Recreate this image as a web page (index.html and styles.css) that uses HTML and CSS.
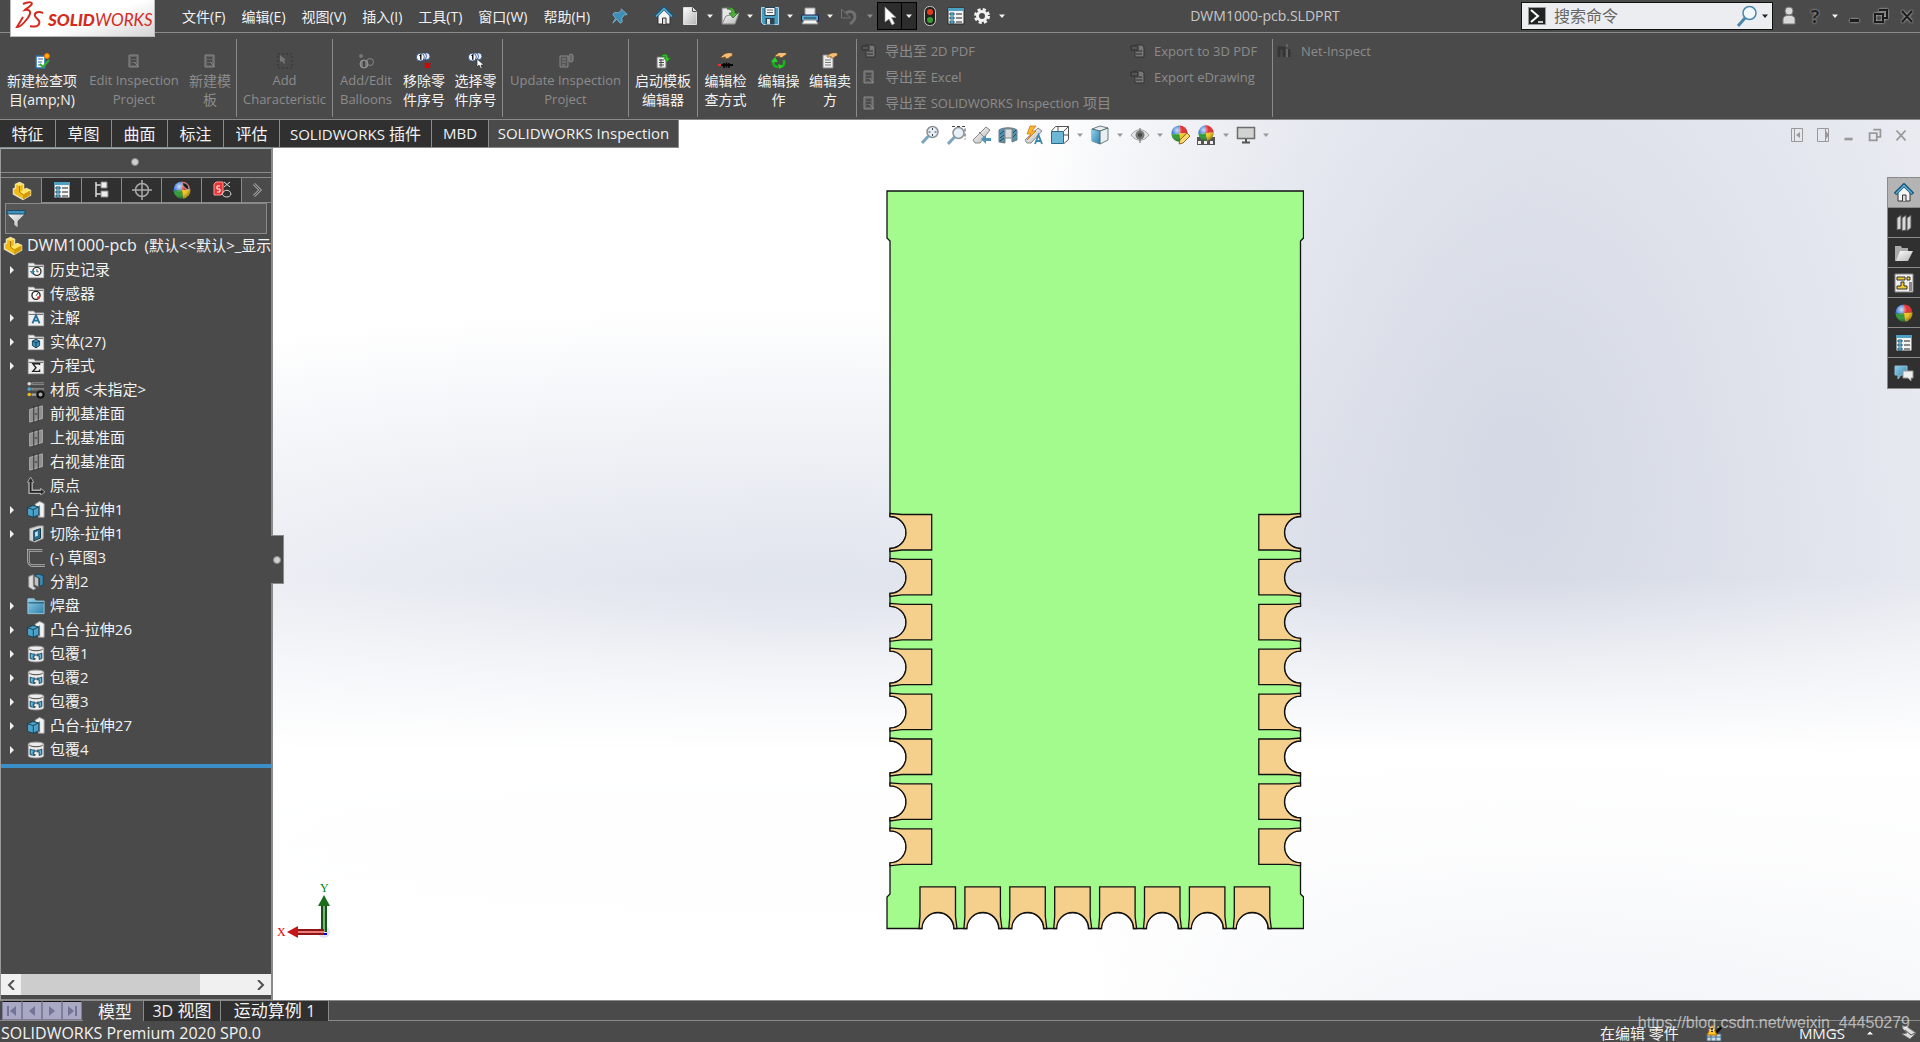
FILE: index.html
```html
<!DOCTYPE html>
<html lang="zh-CN">
<head>
<meta charset="utf-8">
<title>DWM1000-pcb.SLDPRT - SOLIDWORKS</title>
<link rel="stylesheet" href="styles.css">
</head>
<body>
<svg class="sprite" aria-hidden="true">
  <defs>
    <linearGradient id="gBlue" x1="0" y1="0" x2="1" y2="1"><stop offset="0" stop-color="#8fd0ee"/><stop offset="1" stop-color="#2f7fa6"/></linearGradient>
    <linearGradient id="gGrey" x1="0" y1="0" x2="1" y2="1"><stop offset="0" stop-color="#ffffff"/><stop offset="1" stop-color="#b4b4b4"/></linearGradient>
    <radialGradient id="gShine" cx=".35" cy=".3" r=".7"><stop offset="0" stop-color="#fff" stop-opacity=".75"/><stop offset=".5" stop-color="#fff" stop-opacity="0"/><stop offset="1" stop-color="#000" stop-opacity=".3"/></radialGradient>
    <symbol id="i-caret" viewBox="0 0 10 10"><path d="M2 3.500h6L5 7z" fill="currentColor"/></symbol>
    <symbol id="i-home" viewBox="0 0 20 20"><path d="M4 9v9h12V9l-6-6z" fill="#f4f4f4" stroke="#333"/><path d="M8.500 18v-6h3.500v6" fill="#ddd" stroke="#333"/><path d="M1 11 10 2l9 9" fill="none" stroke="#1c5878" stroke-width="3.500"/><path d="M2 10.500 10 2.500l8 8" fill="none" stroke="#58aed4" stroke-width="1.500"/></symbol>
    <symbol id="i-list" viewBox="0 0 20 20"><path d="M2 2h16v16H2z" fill="#f3f3f3" stroke="#2a2a2a"/><path d="M2 2h16v3H2z" fill="#4d9fc4"/><path d="M4 7h4v2H4zm0 4h4v2H4zm0 4h4v2H4z" fill="#8fd0ee" stroke="#155a7c"/><path d="M10 8h6m-6 4h6m-6 4h6" stroke="#222"/></symbol>
    <symbol id="i-ball" viewBox="0 0 20 20"><path d="M10 10V1.500A8.500 8.500 0 0 0 1.500 11z" fill="#3c78d8"/><path d="M10 10V1.500a8.500 8.500 0 0 1 8.500 8z" fill="#e23030"/><path d="M10 10 1.500 11A8.500 8.500 0 0 0 11 18.500z" fill="#2f9a35"/><path d="m10 10 8.500-.5A8.500 8.500 0 0 1 11 18.500z" fill="#f3c81d"/><circle cx="10" cy="10" r="8.500" fill="url(#gShine)"/></symbol>
    <symbol id="i-part" viewBox="0 0 20 20"><path d="m1.500 8 2-1V3.500l4-2 4 2V9l3-1.500 4 2v4.500L11 18.500 1.500 13z" fill="#f2b90f" stroke="#e8dfb8" stroke-width="1.500"/><path d="m3.500 3.500 4 1.500 4-1.500-4-2zM7.500 11l7-3.500 4 2-7.500 4z" fill="#ffe566"/><path d="M11 13.500v5l7.500-4.500V9.500z" fill="#d59a08"/><path d="M7.500 5v6l3.500 2.500" fill="none" stroke="#8c6300" stroke-width=".7"/></symbol>
    <symbol id="i-folder" viewBox="0 0 20 20"><path d="M1.500 18.500v-16h6l1.500 2h9.500v14z" fill="#efefef" stroke="#bdbdbd"/><path d="M2 6h16" stroke="#555"/></symbol>
    <symbol id="i-plane" viewBox="0 0 20 20"><path d="M3 5 17 1v14L3 19z" fill="#8f8f8f" stroke="#bababa"/><path d="M7.500 1v18.500M12.500 0v18" stroke="#2c2c2c"/><path d="M8.500 10h3" stroke="#2c2c2c"/></symbol>
    <symbol id="i-boss" viewBox="0 0 20 20"><path d="M9 3.500 14 .5l5 2.500v15h-6z" fill="#f2f2f2" stroke="#a0a0a0"/><path d="M14 5v12" stroke="#666"/><path d="m.500 7.500 6-2.500 6.500 1.500v9l-6 2.500-6.500-2z" fill="#4ea1c7" stroke="#123d52"/><path d="m.500 7.500 6.500 2 6-3M7 9.500v8.500" fill="none" stroke="#0f4059"/></symbol>
    <symbol id="i-cut" viewBox="0 0 20 20"><path d="m3 4 10-3h5v14l-9 4-6-2z" fill="#d8d8d8" stroke="#a2a2a2"/><path d="M7.500 6.500 15 4v10.500l-7.500 3z" fill="#2a6d8f" stroke="#0f2c3b"/><path d="m9 8 3-1v5l-3 1z" fill="#bfe6f7"/></symbol>
    <symbol id="i-split" viewBox="0 0 20 20"><path d="m2 4 5-2v13l3 2-3 1.500-5-3z" fill="#dedede" stroke="#999"/><path d="m8 3 5-2 5 2v10l-4 2V6z" fill="#3b8fb7" stroke="#153f54"/><path d="m8 3 5 3v10l-5-3z" fill="#c3c3c3" stroke="#555"/></symbol>
    <symbol id="i-wrap" viewBox="0 0 20 20"><path d="M1.500 3.500C1.500.5 18.500.5 18.500 3.500v13c0 3-17 3-17 0z" fill="#ececec" stroke="#aaa"/><path d="M2.500 4.500c3 2.500 12 2.500 15 0" fill="none" stroke="#333"/><path d="M3.500 9c2 1 3.500 1.200 5.500 1.200v2H7v2.500h2V16c-2 0-4-.3-5.500-1zM11 10.200c2 0 3.500-.2 5.500-1.200v6c-1.500.7-2 .8-3 1v-4h-2.500z" fill="#5cb3da" stroke="#123c50"/></symbol>
    <symbol id="i-export" viewBox="0 0 16 16"><path d="M5 2h7l2 2v10H5z" fill="#777" stroke="#333"/><path d="M1 3h7v4H1zM6 8h6M6 11h6" fill="#555" stroke="#2c2c2c"/></symbol>
    <symbol id="i-sheet" viewBox="0 0 16 16"><path d="M3 2h9v12H3z" fill="#646464" stroke="#888"/><path d="M5 5h5M5 8h5M5 11h5" stroke="#333"/><path d="m8 9 5 5" stroke="#888"/></symbol>
    <symbol id="i-balloon" viewBox="0 0 16 16"><circle cx="12" cy="6" r="4" fill="#e6efff" stroke="#2e4f8e"/><circle cx="8" cy="6" r="4" fill="#e6efff" stroke="#2e4f8e"/><circle cx="5" cy="7" r="4.500" fill="#fff" stroke="#2e4f8e"/><path d="m4 5.500 1.500-1V10" fill="none" stroke="#000" stroke-width="1.500"/></symbol>
    <symbol id="i-hand" viewBox="0 0 16 16"><path d="m1 6 5-4 4-1h5v4l-3 1-2 2H6l1-2-5 1z" fill="#f4c078" stroke="#7c4b15" stroke-width=".8"/></symbol>
    <symbol id="i-lens" viewBox="0 0 20 20"><circle cx="12.500" cy="7" r="5.500" fill="#e6f0f6" stroke="#8b9297" stroke-width="1.500"/><path d="m8.500 11-6.500 7" stroke="#7aa5bd" stroke-width="3"/></symbol>
    <symbol id="i-restore" viewBox="0 0 20 20"><path d="M8 4h8v8h-3M4 8h8v8H4z" fill="none" stroke="currentColor" stroke-width="2"/></symbol>
    <symbol id="i-min" viewBox="0 0 20 20"><path d="M5 13h9v3H5z" fill="currentColor"/></symbol>
    <symbol id="i-close" viewBox="0 0 20 20"><path d="m5 5 10 11M15 5 5 16" stroke="currentColor" stroke-width="2"/></symbol>
    <symbol id="i-arrow" viewBox="0 0 10 10"><path d="M3 1v8l4-4z" fill="currentColor"/></symbol>
  </defs>
</svg>

<header class="titlebar">
  <div class="logo">
    <svg viewBox="0 0 144 36" width="144" height="36" role="img" aria-label="SOLIDWORKS">
      <g fill="none" stroke="#d52b1e" stroke-width="2">
        <path d="M12 4c6-3 12-2 7 2-2 2-4 3-5 4 7-1 6 4 2 9-3 4-7 8-10 8l6-10" />
        <path d="M32 13c-4-2-9-1-8 3 1 3 6 4 4 8-1 3-6 3-9 2"/>
      </g>
      <text x="37" y="26" class="logo-text"><tspan class="logo-bold">SOLID</tspan><tspan>WORKS</tspan></text>
    </svg>
  </div>
  <nav class="menu">
    <button>文件(F)</button><button>编辑(E)</button><button>视图(V)</button><button>插入(I)</button><button>工具(T)</button><button>窗口(W)</button><button>帮助(H)</button>
  </nav>
  <button class="pin" aria-label="固定菜单"><svg class="ic18" viewBox="0 0 20 20"><path d="m11 2 7 6-2 1-1-.5-3 4 .5 4L10 18l-3.500-4.500L2 18l3-5.500L2 8l2-2 4 .5 4-3z" fill="#3d8fb8" stroke="#7fb0c8"/></svg></button>
  <div class="quick">
    <button class="tool" aria-label="主页"><svg class="ic20"><use href="#i-home"/></svg></button>
    <button class="tool" aria-label="新建"><svg class="ic20" viewBox="0 0 20 20"><path d="M3.500 1.500h9l4 4v13h-13z" fill="url(#gGrey)" stroke="#ddd"/><path d="M12.500 1.500v4h4" fill="none" stroke="#555"/></svg></button><button class="drop" aria-label="更多"><svg class="ic10"><use href="#i-caret"/></svg></button>
    <button class="tool" aria-label="打开"><svg class="ic20" viewBox="0 0 20 20"><path d="M2 2h9l3 3v13H2z" fill="#e8e8e8" stroke="#777"/><path d="m6 10 13-3-4 11H2z" fill="url(#gGrey)" stroke="#888"/><path d="M7 3c5-3 8 0 8 4h3l-5 5-4-5h3c0-3-2-4-5-4z" fill="#4fb03c" stroke="#1d6112" stroke-width=".7"/></svg></button><button class="drop" aria-label="更多"><svg class="ic10"><use href="#i-caret"/></svg></button>
    <button class="tool" aria-label="保存"><svg class="ic20" viewBox="0 0 20 20"><path d="M1.500 1.500h17v17h-15l-2-2z" fill="#4b9cc3" stroke="#a8d6ea"/><path d="M5 1.500h10v8H5z" fill="#f6f6f6" stroke="#245"/><path d="M7 4h6M7 6.500h6" stroke="#666"/><path d="M5.500 12h9v6.500h-9z" fill="#2c4350"/><path d="M7 13h3v5H7z" fill="#ddd"/></svg></button><button class="drop" aria-label="更多"><svg class="ic10"><use href="#i-caret"/></svg></button>
    <button class="tool" aria-label="打印"><svg class="ic20" viewBox="0 0 20 20"><path d="M5 2h10v8H5z" fill="#eee" stroke="#999"/><path d="M1.500 9h17v6h-17z" fill="#58a8cd" stroke="#225"/><path d="M4 12h12" stroke="#163b4f"/><path d="M4 14h12l2 4H2z" fill="#f4f4f4" stroke="#888"/></svg></button><button class="drop" aria-label="更多"><svg class="ic10"><use href="#i-caret"/></svg></button>
    <button class="tool" aria-label="撤销" disabled><svg class="ic20" viewBox="0 0 20 20"><path d="M6 7c7-5 14 4 4 11" fill="none" stroke="#717171" stroke-width="3"/><path d="M1.500 3v9h9z" fill="#4a4a4a" stroke="#717171"/></svg></button><button class="drop dim" aria-label="更多" disabled><svg class="ic10"><use href="#i-caret"/></svg></button>
    <div class="select-tool"><button class="tool" aria-label="选择"><svg class="ic20" viewBox="0 0 20 20"><path d="M5 1v15l4-3 3 6 2.500-1.500-3-6H16z" fill="#fff" stroke="#999" stroke-width=".7"/></svg></button><button class="drop" aria-label="更多"><svg class="ic10"><use href="#i-caret"/></svg></button></div>
    <button class="tool" aria-label="重建模型"><svg class="ic20" viewBox="0 0 20 20"><rect x="4.500" y=".5" width="11" height="19" rx="5" fill="#222" stroke="#ccc"/><circle cx="10" cy="6" r="3" fill="#e23b20"/><circle cx="10" cy="14" r="3" fill="#3a9b32"/></svg></button>
    <button class="tool" aria-label="文件属性"><svg class="ic20"><use href="#i-list"/></svg></button>
    <button class="tool" aria-label="选项"><svg class="ic20" viewBox="0 0 20 20"><circle cx="10" cy="10" r="6.500" fill="none" stroke="#f2f2f2" stroke-width="3" stroke-dasharray="3 2.100"/><circle cx="10" cy="10" r="4.500" fill="none" stroke="#f2f2f2" stroke-width="3"/></svg></button><button class="drop" aria-label="更多"><svg class="ic10"><use href="#i-caret"/></svg></button>
  </div>
  <h1 class="doc-title">DWM1000-pcb.SLDPRT</h1>
  <div class="search">
    <svg class="ic18" viewBox="0 0 18 18"><path d="M.5.500h17v17H.5z" fill="#222" stroke="#999"/><path d="m3 3 7 6-7 6" fill="none" stroke="#fff" stroke-width="2"/><path d="M10 15h5" stroke="#fff" stroke-width="1.500"/></svg>
    <input type="text" placeholder="搜索命令" aria-label="搜索命令">
    <svg class="ic22" viewBox="0 0 22 22"><circle cx="13.500" cy="8" r="6.500" fill="#f2f8fc" stroke="#4c86a8" stroke-width="1.500"/><path d="m9 13-7 8" stroke="#4c86a8" stroke-width="3"/></svg>
    <button class="drop dark" aria-label="更多"><svg class="ic10"><use href="#i-caret"/></svg></button>
  </div>
  <div class="window-tools">
    <button class="tool" aria-label="登录"><svg class="ic20" viewBox="0 0 20 20"><circle cx="10" cy="5" r="4" fill="#d9d9d9" stroke="#777"/><path d="M4 18v-5c0-5 12-5 12 0v5z" fill="#d9d9d9" stroke="#777"/></svg></button>
    <button class="tool help" aria-label="帮助">?</button><button class="drop" aria-label="更多"><svg class="ic10"><use href="#i-caret"/></svg></button>
    <button class="tool win" aria-label="最小化"><svg class="ic20"><use href="#i-min"/></svg></button>
    <button class="tool win" aria-label="还原"><svg class="ic20"><use href="#i-restore"/></svg></button>
    <button class="tool win" aria-label="关闭"><svg class="ic20"><use href="#i-close"/></svg></button>
  </div>
</header>

<section class="ribbon">
  <div class="group g-project">
    <button><svg class="ic16" viewBox="0 0 16 16"><path d="M2 3h9v12H2z" fill="#fff" stroke="#2a6aa8" stroke-width="1.500"/><path d="M4 6h5M4 9h4M4 12h3" stroke="#2a6aa8"/><path d="m6 11 3 3 6-7" fill="none" stroke="#2fae2f" stroke-width="2"/><circle cx="13" cy="3" r="2.500" fill="#ffb400" stroke="#ff6a00"/></svg><span>新建检查项<br>目(amp;N)</span></button>
    <button disabled><svg class="ic16"><use href="#i-sheet"/></svg><span class="en">Edit Inspection<br>Project</span></button>
    <button disabled><svg class="ic16"><use href="#i-sheet"/></svg><span>新建模<br>板</span></button>
  </div>
  <div class="group g-char">
    <button disabled><svg class="ic16" viewBox="0 0 16 16"><path d="M1 1h14v14H1z" fill="none" stroke="#333" stroke-dasharray="2 2"/><path d="M3 2v7l2-1 2 3 1-1-1-3h2z" fill="#777"/></svg><span class="en">Add<br>Characteristic</span></button>
  </div>
  <div class="group g-balloon">
    <button disabled><svg class="ic16" viewBox="0 0 16 16"><circle cx="12" cy="9" r="3.500" fill="none" stroke="#888"/><circle cx="6" cy="11" r="4" fill="#777" stroke="#999"/><path d="M6 8v6" stroke="#333" stroke-width="1.500"/><circle cx="3" cy="3" r="2" fill="#777"/></svg><span class="en">Add/Edit<br>Balloons</span></button>
    <button><svg class="ic16" viewBox="0 0 16 16"><use href="#i-balloon" y="-2" width="14" height="14"/><path d="m9 10 5 5m0-5-5 5" stroke="#e00000" stroke-width="2"/></svg><span>移除零<br>件序号</span></button>
    <button><svg class="ic16" viewBox="0 0 16 16"><use href="#i-balloon" y="-2" width="14" height="14"/><path d="M9 6v8l2-2 2 4 1-1-1-3h3z" fill="#fff" stroke="#222" stroke-width=".6"/></svg><span>选择零<br>件序号</span></button>
  </div>
  <div class="group g-update">
    <button disabled><svg class="ic16" viewBox="0 0 16 16"><path d="M2 3h8v11H2z" fill="#555" stroke="#888"/><path d="M4 6h4M4 9h4M4 12h3" stroke="#888"/><rect x="11" y="1" width="4" height="8" rx="2" fill="#666" stroke="#888"/></svg><span class="en">Update Inspection<br>Project</span></button>
  </div>
  <div class="group g-template">
    <button><svg class="ic16" viewBox="0 0 16 16"><path d="M2 4h9v11H2z" fill="#f1f1f1" stroke="#777"/><path d="M4 7h5M4 9.500h5M4 12h5M6 6v8" stroke="#444"/><path d="M7 2c4-2 6 0 6 3h2.500L12 9 9 5h2c0-2-2-2-4-1z" fill="#35c42a" stroke="#117a0a" stroke-width=".6"/></svg><span>启动模板<br>编辑器</span></button>
  </div>
  <div class="group g-edit">
    <button><svg class="ic16" viewBox="0 0 16 16"><use href="#i-hand" x="2" y="-1" width="13" height="13"/><path d="M1 12h14" stroke="#000" stroke-width="2"/><path d="M6 10v5M8.500 9.500v5M11 10v5" stroke="#000" stroke-width="1.500"/><path d="M0 12h3" stroke="#e33" stroke-width="2"/></svg><span>编辑检<br>查方式</span></button>
    <button><svg class="ic16" viewBox="0 0 16 16"><use href="#i-hand" x="3" y="-2" width="13" height="13"/><path d="M3 7c-2 5 1 7 4 7M13 7c1 4-1 7-4 7" fill="none" stroke="#18b31a" stroke-width="2.500"/><path d="m0 9 4-5 3 5zM8 16l-1-5 5 2z" fill="#27d327"/></svg><span>编辑操<br>作</span></button>
    <button><svg class="ic16" viewBox="0 0 16 16"><path d="M1 2h10v13H1z" fill="#eee" stroke="#888"/><path d="M3 7h6M3 9.500h6M3 12h6" stroke="#777"/><use href="#i-hand" x="4" y="-1" width="12" height="12"/></svg><span>编辑卖<br>方</span></button>
  </div>
  <div class="group exports">
    <button disabled><svg class="ic16"><use href="#i-export"/></svg><span>导出至 <span class="en">2D PDF</span></span></button>
    <button disabled><svg class="ic16"><use href="#i-export"/></svg><span class="en">Export to 3D PDF</span></button>
    <button disabled><svg class="ic16"><use href="#i-sheet"/></svg><span>导出至 <span class="en">Excel</span></span></button>
    <button disabled><svg class="ic16"><use href="#i-export"/></svg><span class="en">Export eDrawing</span></button>
    <button disabled class="wide"><svg class="ic16"><use href="#i-sheet"/></svg><span>导出至 <span class="en">SOLIDWORKS Inspection</span> 项目</span></button>
  </div>
  <div class="group net">
    <button disabled><svg class="ic16" viewBox="0 0 16 16"><path d="M2 14V5h5v9M12 6v8" fill="none" stroke="#363636" stroke-width="3"/><path d="M10 14V6M10 4V1" stroke="#666" stroke-width="2"/></svg><span class="en">Net-Inspect</span></button>
  </div>
</section>

<main class="work">
  <div class="command-row">
    <div class="cmd-tabs">
      <button>特征</button><button>草图</button><button>曲面</button><button>标注</button><button>评估</button><button><span><span class="en">SOLIDWORKS</span> 插件</span></button><button><span class="en">MBD</span></button><button class="active"><span class="en">SOLIDWORKS Inspection</span></button>
    </div>
    <div class="hud">
      <button class="tool" aria-label="整屏显示全图"><svg class="ic20" viewBox="0 0 20 20"><use href="#i-lens"/><path d="M12.500 3v8M8.500 7h8" stroke="#444" stroke-dasharray="2 4"/></svg></button>
      <button class="tool" aria-label="局部放大"><svg class="ic20" viewBox="0 0 20 20"><path d="M6 1.500h13v13" fill="none" stroke="#444" stroke-dasharray="3 2"/><use href="#i-lens" y="1"/></svg></button>
      <button class="tool" aria-label="上一视图"><svg class="ic20" viewBox="0 0 20 20"><path d="M1 15 14 2l4 3L8 18H3z" fill="url(#gGrey)" stroke="#888"/><path d="m7 7 5 5" stroke="#888"/><path d="m9 14 5-4v3h5v3h-5v3z" fill="#4d94b8"/></svg></button>
      <button class="tool" aria-label="剖面视图"><svg class="ic20" viewBox="0 0 20 20"><path d="M1 5c4-3 14-3 18 0v10l-5 2V9H7v9l-6-1z" fill="#4f94b5" stroke="#777"/><path d="M7 4h7v9H7z" fill="#ddd" stroke="#888"/><path d="m2 9 4-3m-4 7 4-3m-4 6 4-3m9-5 3-3m-3 7 3-3" stroke="#1d4a60"/></svg></button>
      <button class="tool" aria-label="动态注解视图"><svg class="ic20" viewBox="0 0 20 20"><path d="M1 15 14 3l4 3L7 18H3z" fill="url(#gGrey)" stroke="#888"/><path d="m6 1-3 8h4l-4 6 9-9H8l4-5z" fill="#ffb52c" stroke="#c46c10" stroke-width=".7"/><path d="m11 19 3.500-9L18 19m-6-3h5" fill="none" stroke="#3b86ab" stroke-width="1.800"/></svg></button>
      <button class="tool" aria-label="视图定向"><svg class="ic20" viewBox="0 0 20 20"><path d="m1.500 6 4-4.500h13v13l-4.500 4m0-12.500 4.500-4.500M8 1.500V7m10 3h-4" fill="none" stroke="#555"/><path d="M1.500 6.500h12v12h-12z" fill="#6db6d6" stroke="#2c6a88"/></svg></button><button class="drop" aria-label="更多"><svg class="ic10"><use href="#i-caret"/></svg></button>
      <button class="tool" aria-label="显示样式"><svg class="ic20" viewBox="0 0 20 20"><path d="m2 4 8-3 8 2v12l-8 4-8-3z" fill="#e9eef1" stroke="#6b7a82"/><path d="m2 4 8 2v13l-8-3z" fill="url(#gBlue)"/><path d="M10 6v13M2 4l8 2 8-3" fill="none" stroke="#44626f"/></svg></button><button class="drop" aria-label="更多"><svg class="ic10"><use href="#i-caret"/></svg></button>
      <button class="tool" aria-label="隐藏/显示项目"><svg class="ic20" viewBox="0 0 20 20"><path d="M1 10c5-7 13-7 18 0-5 7-13 7-18 0z" fill="#e4e4e4" stroke="#a5a5a5"/><circle cx="10" cy="10" r="4.500" fill="#777"/><circle cx="10" cy="10" r="2" fill="#333"/><path d="M10 3v15" stroke="#666"/></svg></button><button class="drop" aria-label="更多"><svg class="ic10"><use href="#i-caret"/></svg></button>
      <button class="tool" aria-label="编辑外观"><svg class="ic20" viewBox="0 0 20 20"><use href="#i-ball" x="0" y="-1" width="19" height="19"/><path d="m9 19 1-4 7-7 3 3-7 7z" fill="#ffd76c" stroke="#8b6a2c"/></svg></button>
      <button class="tool" aria-label="应用布景"><svg class="ic20" viewBox="0 0 20 20"><path d="M1 12h18v8H1z" fill="#555"/><path d="M2 16h3v3H2zm6 0h3v3H8zm6 0h3v3h-3z" fill="#eee"/><use href="#i-ball" x="1" y="-1" width="18" height="18"/></svg></button><button class="drop" aria-label="更多"><svg class="ic10"><use href="#i-caret"/></svg></button>
      <button class="tool" aria-label="视图设定"><svg class="ic20" viewBox="0 0 20 20"><path d="M1.500 2.500h17v11h-17z" fill="#d2d2d2" stroke="#6d6d6d" stroke-width="1.500"/><path d="M10 14v3m-4 .5h8" stroke="#555" stroke-width="2"/></svg></button><button class="drop" aria-label="更多"><svg class="ic10"><use href="#i-caret"/></svg></button>
    </div>
    <div class="doc-tools">
      <button class="tool" aria-label="左侧窗格"><svg class="ic16" viewBox="0 0 16 16"><path d="M2.500 1.500h11v13h-11zM5.500 2v12" fill="none" stroke="currentColor"/><path d="M11 5v6L7 8z" fill="currentColor"/></svg></button>
      <button class="tool" aria-label="右侧窗格"><svg class="ic16" viewBox="0 0 16 16"><path d="M2.500 1.500h11v13h-11zM10.500 2v12" fill="none" stroke="currentColor"/><path d="M11 4v8l3-4z" fill="currentColor"/></svg></button>
      <button class="tool" aria-label="最小化文档"><svg class="ic18"><use href="#i-min"/></svg></button>
      <button class="tool" aria-label="还原文档"><svg class="ic18"><use href="#i-restore"/></svg></button>
      <button class="tool" aria-label="关闭文档"><svg class="ic18"><use href="#i-close"/></svg></button>
    </div>
  </div>

  <div class="workspace">
    <aside class="panel">
      <div class="grip"><i class="dot"></i></div>
      <div class="panel-tabs">
        <button class="active" aria-label="特征树"><svg class="ic20"><use href="#i-part"/></svg></button>
        <button aria-label="属性"><svg class="ic20"><use href="#i-list"/></svg></button>
        <button aria-label="配置"><svg class="ic20" viewBox="0 0 20 20"><path d="M4 2v15M4 5h6M4 14h6" fill="none" stroke="#ddd" stroke-width="1.500"/><path d="M9 2h6v6H9zM9 11h7v6H9z" fill="#eee" stroke="#888"/></svg></button>
        <button aria-label="尺寸专家"><svg class="ic20" viewBox="0 0 20 20"><circle cx="10" cy="10" r="6.500" fill="none" stroke="#aaa" stroke-width="1.500"/><path d="M10 0v20M0 10h20" stroke="#aaa" stroke-width="1.500"/></svg></button>
        <button aria-label="外观"><svg class="ic20" viewBox="0 0 20 20"><use href="#i-ball"/><path d="M10 3c4-1 7 2 7 7-3-1-6-3-7-7z" fill="#1c1c1c" stroke="#ddd" stroke-width=".7"/></svg></button>
        <button aria-label="检查"><svg class="ic20" viewBox="0 0 20 20"><path d="m2 4 2-2h7v11l-2 2H2z" fill="#e83434" stroke="#ff9a9a"/><path d="M8 6H5v3h3v3H5" fill="none" stroke="#fff"/><path d="m12 2 6 5m0-5-6 5m-2 7c2-5 8-5 9 0-1 4-7 4-9 0z" fill="none" stroke="#ddd"/></svg></button>
        <button class="more" aria-label="更多选项卡"><svg class="ic16" viewBox="0 0 16 16"><path d="m5 2 6 6-6 6" fill="none" stroke="#999" stroke-width="3"/><path d="m5 2 6 6-6 6" fill="none" stroke="#4a4a4a"/></svg></button>
      </div>
      <label class="filter"><svg class="ic20" viewBox="0 0 20 20"><path d="M1 2h18v3l-7 7v7l-4-3v-4L1 5z" fill="url(#gGrey)" stroke="#333" stroke-width=".5"/><path d="M1 1.500h18V5H1z" fill="#3f93ba" stroke="#1d4b62"/></svg><input type="text" aria-label="过滤器"></label>
      <ul class="tree">
        <li class="root"><svg class="ic20"><use href="#i-part"/></svg><span><span class="name">DWM1000-pcb</span>&nbsp; (默认&lt;&lt;默认&gt;_显示</span></li>
        <li><button class="twist" aria-label="展开"><svg class="ic10"><use href="#i-arrow"/></svg></button><svg class="ic18" viewBox="0 0 20 20"><use href="#i-folder"/><circle cx="11" cy="11.500" r="4.500" fill="#fff" stroke="#333" stroke-width="1.500"/><path d="M11 9v3h2" fill="none" stroke="#333"/><path d="m3 11 3 4 3-4z" fill="#3487b0"/></svg><span>历史记录</span></li>
        <li><i class="twist"></i><svg class="ic18" viewBox="0 0 20 20"><use href="#i-folder"/><circle cx="10" cy="11.500" r="4.500" fill="#fff" stroke="#222" stroke-width="1.500"/><path d="m10 12 3-4" stroke="#222"/><path d="M12 16a5 5 0 0 0 3-4l-4 1z" fill="#e03a20"/></svg><span>传感器</span></li>
        <li><button class="twist" aria-label="展开"><svg class="ic10"><use href="#i-arrow"/></svg></button><svg class="ic18" viewBox="0 0 20 20"><use href="#i-folder"/><path d="m6 16 4-9 4 9m-7-3h6" fill="none" stroke="#246f96" stroke-width="2"/></svg><span>注解</span></li>
        <li><button class="twist" aria-label="展开"><svg class="ic10"><use href="#i-arrow"/></svg></button><svg class="ic18" viewBox="0 0 20 20"><use href="#i-folder"/><path d="m6 9 4-2 4 2v5l-4 2.500L6 14z" fill="#3e93bb" stroke="#10394e"/><path d="m6 9 4 2 4-2m-4 2v5" fill="none" stroke="#10394e"/></svg><span>实体(27)</span></li>
        <li><button class="twist" aria-label="展开"><svg class="ic10"><use href="#i-arrow"/></svg></button><svg class="ic18" viewBox="0 0 20 20"><use href="#i-folder"/><path d="M14 9V7.500H6.500L10 12l-3.500 4H14v-2" fill="none" stroke="#222" stroke-width="1.500"/></svg><span>方程式</span></li>
        <li><i class="twist"></i><svg class="ic18" viewBox="0 0 20 20"><path d="M5 3h14M5 9h14M5 15h7" stroke="#aaa" stroke-width="2.500"/><path d="M6 3h13M6 9h13" stroke="#444"/><circle cx="2.500" cy="3" r="2" fill="#ddd"/><circle cx="2.500" cy="9" r="2" fill="#4fa9d2"/><circle cx="2.500" cy="15" r="2" fill="#f0b818"/><circle cx="15" cy="15" r="3.500" fill="#aaa" stroke="#111" stroke-width="2.500"/></svg><span>材质 &lt;未指定&gt;</span></li>
        <li><i class="twist"></i><svg class="ic18"><use href="#i-plane"/></svg><span>前视基准面</span></li>
        <li><i class="twist"></i><svg class="ic18"><use href="#i-plane"/></svg><span>上视基准面</span></li>
        <li><i class="twist"></i><svg class="ic18"><use href="#i-plane"/></svg><span>右视基准面</span></li>
        <li><i class="twist"></i><svg class="ic18" viewBox="0 0 20 20"><path d="M4 3v13.500h13" fill="none" stroke="#b0b0b0" stroke-width="5"/><path d="m.5 6 3.500-6 3.500 6zM15 12.500l5 4-5 4z" fill="#333" stroke="#b0b0b0"/><path d="M4 3v13.500h13" fill="none" stroke="#222" stroke-width="2"/></svg><span>原点</span></li>
        <li><button class="twist" aria-label="展开"><svg class="ic10"><use href="#i-arrow"/></svg></button><svg class="ic18"><use href="#i-boss"/></svg><span>凸台-拉伸1</span></li>
        <li><button class="twist" aria-label="展开"><svg class="ic10"><use href="#i-arrow"/></svg></button><svg class="ic18"><use href="#i-cut"/></svg><span>切除-拉伸1</span></li>
        <li><i class="twist"></i><svg class="ic18" viewBox="0 0 20 20"><path d="M17 1.500H1.500V13c0 3 2 5.500 5 5.500H20" fill="none" stroke="#b0b0b0" stroke-width="3"/><path d="M17 1.500H1.500V13c0 3 2 5.500 5 5.500H20" fill="none" stroke="#444"/></svg><span>(-) 草图3</span></li>
        <li><i class="twist"></i><svg class="ic18"><use href="#i-split"/></svg><span>分割2</span></li>
        <li><button class="twist" aria-label="展开"><svg class="ic10"><use href="#i-arrow"/></svg></button><svg class="ic18" viewBox="0 0 20 20"><path d="M1 18.500V2h7l1.500 2.500H19v14z" fill="url(#gBlue)" stroke="#9bc9de"/><path d="M1.500 6.500H19" stroke="#163f54"/></svg><span>焊盘</span></li>
        <li><button class="twist" aria-label="展开"><svg class="ic10"><use href="#i-arrow"/></svg></button><svg class="ic18"><use href="#i-boss"/></svg><span>凸台-拉伸26</span></li>
        <li><button class="twist" aria-label="展开"><svg class="ic10"><use href="#i-arrow"/></svg></button><svg class="ic18"><use href="#i-wrap"/></svg><span>包覆1</span></li>
        <li><button class="twist" aria-label="展开"><svg class="ic10"><use href="#i-arrow"/></svg></button><svg class="ic18"><use href="#i-wrap"/></svg><span>包覆2</span></li>
        <li><button class="twist" aria-label="展开"><svg class="ic10"><use href="#i-arrow"/></svg></button><svg class="ic18"><use href="#i-wrap"/></svg><span>包覆3</span></li>
        <li><button class="twist" aria-label="展开"><svg class="ic10"><use href="#i-arrow"/></svg></button><svg class="ic18"><use href="#i-boss"/></svg><span>凸台-拉伸27</span></li>
        <li><button class="twist" aria-label="展开"><svg class="ic10"><use href="#i-arrow"/></svg></button><svg class="ic18"><use href="#i-wrap"/></svg><span>包覆4</span></li>
      </ul>
      <div class="hscroll">
        <button aria-label="向左滚动"><svg class="ic10" viewBox="0 0 10 10"><path d="M8 0 3 5l5 5" fill="none" stroke="#505050" stroke-width="2"/></svg></button>
        <div class="track"><div class="thumb"></div></div>
        <button aria-label="向右滚动"><svg class="ic10" viewBox="0 0 10 10"><path d="m2 0 5 5-5 5" fill="none" stroke="#505050" stroke-width="2"/></svg></button>
      </div>
      <div class="panel-foot"></div>
    </aside>

    <section class="viewport">
      <button class="collapse" aria-label="收起面板"><i class="dot"></i></button>
      <svg class="pcb" viewBox="0 0 418 740" width="418" height="740" role="img" aria-label="DWM1000 PCB">
        <defs>
          <path id="pad" d="M0-19 12-18H41.700V17.500H12L0 19V16A16 16 0 0 0 0-16z" fill="#f4d08c" stroke="#111" stroke-width="1.300"/>
          <g id="pads">
            <use href="#pad"/><use href="#pad" y="44.900"/><use href="#pad" y="89.800"/><use href="#pad" y="134.700"/><use href="#pad" y="179.600"/><use href="#pad" y="224.500"/><use href="#pad" y="269.400"/><use href="#pad" y="314.300"/>
          </g>
        </defs>
        <path d="M1 1H417.500V48l-3 3V326.500a16 16 0 0 0 0 32v12.900a16 16 0 0 0 0 32v12.900a16 16 0 0 0 0 32v12.900a16 16 0 0 0 0 32v12.900a16 16 0 0 0 0 32v12.900a16 16 0 0 0 0 32v12.900a16 16 0 0 0 0 32v12.900a16 16 0 0 0 0 32V704l3 3V738.500H382a16 16 0 0 0-32 0h-12.900a16 16 0 0 0-32 0h-12.900a16 16 0 0 0-32 0h-12.900a16 16 0 0 0-32 0h-12.900a16 16 0 0 0-32 0h-12.900a16 16 0 0 0-32 0h-12.900a16 16 0 0 0-32 0h-12.900a16 16 0 0 0-32 0H1V707l3-3V672.800a16 16 0 0 0 0-32v-12.900a16 16 0 0 0 0-32v-12.900a16 16 0 0 0 0-32v-12.900a16 16 0 0 0 0-32v-12.900a16 16 0 0 0 0-32v-12.900a16 16 0 0 0 0-32v-12.900a16 16 0 0 0 0-32v-12.900a16 16 0 0 0 0-32V51l-3-3z" fill="#a3fb8e" stroke="#111" stroke-width="1.300"/>
        <use href="#pads" transform="translate(4 342.500)"/>
        <use href="#pads" transform="translate(414.500 342.500) scale(-1 1)"/>
        <use href="#pads" transform="translate(52 738.500) rotate(-90)"/>
      </svg>
      <svg class="triad" viewBox="0 0 60 64" width="60" height="64" role="img" aria-label="坐标轴">
        <circle cx="47" cy="54" r="6" fill="#e3e0f8"/>
        <path d="M44 56h6" stroke="#00c" stroke-width="2"/>
        <path d="M47 27v27" stroke="#145516" stroke-width="6"/><path d="M47 27v27" stroke="#7cb57c" stroke-width="2"/><path d="m47 17 6 11H41z" fill="#1a6e1c"/>
        <path d="M47 54H20" stroke="#8d1717" stroke-width="6"/><path d="M47 54H20" stroke="#ee7b7b" stroke-width="2"/><path d="m10 54 11-6v12z" fill="#c41818"/>
        <text x="0" y="58" class="axis-x">X</text><text x="43" y="14" class="axis-y">Y</text>
      </svg>
      <nav class="task-pane">
        <button class="active" aria-label="资源"><svg class="ic20"><use href="#i-home"/></svg></button>
        <button aria-label="设计库"><svg class="ic20" viewBox="0 0 20 20"><path d="m3 5 4-3v14l-4 1zM8 5l4-3v15l-4 1zM13 5l4-3v13l-4 3z" fill="#d8d8d8" stroke="#555"/></svg></button>
        <button aria-label="文件探索器"><svg class="ic20" viewBox="0 0 20 20"><path d="M1 3h6l1 2h6v4L3 18H1z" fill="#aaa"/><path d="M6 8h13l-5 10H2z" fill="url(#gGrey)"/></svg></button>
        <button aria-label="视图调色板"><svg class="ic20" viewBox="0 0 20 20"><path d="M1 1h18v18H1z" fill="#eee" stroke="#888"/><path d="M3 4h8v3H3zm10 0h3v3h-3zM7 9h3v4h3v3H3v-3h4z" fill="#f4c92c" stroke="#333"/><path d="M15 9h3v9h-3z" fill="#888"/></svg></button>
        <button aria-label="外观、布景和贴图"><svg class="ic20"><use href="#i-ball"/></svg></button>
        <button aria-label="自定义属性"><svg class="ic20"><use href="#i-list"/></svg></button>
        <button aria-label="论坛"><svg class="ic20" viewBox="0 0 20 20"><path d="M1 3h12v9H7l-3 4v-4H1z" fill="url(#gBlue)" stroke="#8ebdd2"/><path d="M9 8h10v7h-2v3l-3-3H9z" fill="#eee" stroke="#999"/></svg></button>
      </nav>
    </section>
  </div>
</main>

<div class="model-tabs">
  <div class="pager">
    <button aria-label="第一个"><svg class="ic16" viewBox="0 0 16 16"><path d="M4 3v10" stroke="#74749a" stroke-width="2"/><path d="M12 3v10L6 8z" fill="#74749a"/></svg></button>
    <button aria-label="上一个"><svg class="ic16" viewBox="0 0 16 16"><path d="M11 3v10L5 8z" fill="#74749a"/></svg></button>
    <button aria-label="下一个"><svg class="ic16" viewBox="0 0 16 16"><path d="M5 3v10l6-5z" fill="#74749a"/></svg></button>
    <button aria-label="最后一个"><svg class="ic16" viewBox="0 0 16 16"><path d="M12 3v10" stroke="#74749a" stroke-width="2"/><path d="M4 3v10l6-5z" fill="#74749a"/></svg></button>
  </div>
  <div class="mtabs">
    <button class="active">模型</button><button><span><span class="en">3D</span> 视图</span></button><button><span>运动算例 <span class="en">1</span></span></button>
  </div>
</div>

<footer class="status">
  <span class="product">SOLIDWORKS Premium 2020 SP0.0</span>
  <span class="editing">在编辑 零件</span>
  <svg class="ic16" viewBox="0 0 16 16"><path d="M1 9h14v7H1z" fill="#c9d8e2" stroke="#41708c"/><path d="M1 12h14M5 9v7M10 9v7" stroke="#41708c"/><path d="m9 9 6-7" stroke="#111" stroke-width="3"/><path d="M6 0 1 10h10z" fill="#ffc629" stroke="#b36b00"/><path d="M6 3v4" stroke="#000" stroke-width="1.500"/></svg>
  <button class="units">MMGS<svg class="ic10" viewBox="0 0 10 10"><path d="M2 6.500h6L5 3.500z" fill="#fff"/></svg></button>
  <svg class="ic16" viewBox="0 0 16 16"><path d="m1 3 4-2 10 7-6 6L1 9l5-1z" fill="#ddd" stroke="#777"/><path d="m4 5 6 5 4-2" fill="none" stroke="#555"/></svg>
  <span class="watermark">https://blog.csdn.net/weixin_44450279</span>
</footer>
</body>
</html>
```
FILE: styles.css
```css
:root {
  --bg: #4a4a4a;
  --dark: #303030;
  --line: #8a8a8a;
  --text: #f2f2f2;
  --dim: #8c8c8c;
}

* { box-sizing: border-box; }

body {
  margin: 0;
  min-height: 100vh;
  display: flex;
  flex-direction: column;
  background: var(--bg);
  color: var(--text);
  font-family: "Open Sans", "Noto Sans CJK SC", sans-serif;
  font-size: 14px;
  overflow-x: hidden;
}

button {
  display: flex;
  align-items: center;
  justify-content: center;
  padding: 0;
  border: 0;
  background: none;
  color: inherit;
  font: inherit;
  white-space: nowrap;
}

svg { flex: none; display: block; }
.sprite { position: absolute; width: 0; height: 0; }
.ic10 { width: 10px; height: 10px; }
.ic16 { width: 16px; height: 16px; }
.ic18 { width: 18px; height: 18px; }
.ic20 { width: 20px; height: 20px; }
.ic22 { width: 22px; height: 22px; }

.tool { width: 26px; height: 26px; }
.drop { width: 14px; height: 26px; }
.drop.dim { color: var(--dim); }

.dot {
  width: 8px;
  height: 8px;
  border-radius: 50%;
  border: 1px solid #888;
  background: #d0d0d0;
}

/* Title bar */
.titlebar {
  display: flex;
  align-items: center;
  height: 33px;
  padding-bottom: 1px;
  border-bottom: 1px solid var(--line);
}

.logo {
  align-self: flex-start;
  margin-left: 10px;
  margin-bottom: -5px;
  width: 145px;
  height: 37px;
  flex: none;
  z-index: 1;
  border: 1px solid #bbb;
  border-top: 0;
  background: linear-gradient(160deg, #fff 55%, #d5d5d5);
}
.logo-text { font: italic 17px "Lato", sans-serif; fill: #d52b1e; }
.logo-bold { font-weight: 900; }

.menu { display: flex; margin-left: 27px; gap: 16px; }
.pin { width: 30px; margin-left: 15px; }
.quick { display: flex; align-items: center; margin-left: 16px; }
.select-tool { display: flex; background: #2c2c2c; border: 1px solid #000; width: 40px; }
.select-tool .tool { width: 25px; border-right: 1px solid #000; }

.doc-title {
  flex: 1;
  margin: 0;
  text-align: center;
  font-size: 14px;
  font-weight: 400;
  color: #c8c8c8;
}

.search {
  display: flex;
  align-items: center;
  width: 252px;
  height: 28px;
  padding-left: 6px;
  border: 1px solid #111;
  background: #ebedf1;
}
.search input {
  flex: 1;
  min-width: 0;
  padding: 0 8px;
  border: 0;
  background: none;
  font: 16px "Open Sans", "Noto Sans CJK SC", sans-serif;
}
.search input::placeholder { color: #666; }
.drop.dark { color: #222; }

.window-tools { display: flex; margin-left: 3px; }
.window-tools .win { color: #1c1c1c; }
.window-tools .win svg { filter: drop-shadow(0 0 1px #ddd); }
.help { font-size: 18px; font-weight: 700; color: #222; text-shadow: 0 0 2px #ddd; }

/* Ribbon */
.ribbon {
  display: flex;
  height: 87px;
  padding: 6px 0 2px;
  border-bottom: 1px solid var(--line);
}
.ribbon .en { font-size: 13px; }
.group { display: grid; border-right: 1px solid var(--line); }
.group button {
  flex-direction: column;
  justify-content: flex-start;
  gap: 2px;
  padding-top: 14px;
  line-height: 19px;
}
.group button:disabled { color: var(--dim); }
.g-project { grid-template-columns: 84px 100px 52px; }
.g-char { grid-template-columns: 95px; }
.g-balloon { grid-template-columns: 66px 50px 53px; }
.g-update { grid-template-columns: 125px; }
.g-template { grid-template-columns: 68px; }
.g-edit { grid-template-columns: 55px 51px 52px; }

.group.exports {
  grid-template-columns: 269px 146px;
  grid-auto-rows: 26px;
}
.group.exports button,
.group.net button {
  flex-direction: row;
  align-items: center;
  gap: 8px;
  padding: 0 0 2px 4px;
  height: 26px;
}
.group.exports .wide { grid-column: 1 / 3; }
.group.net { border: 0; }

/* Command tabs and view toolbar */
.work {
  flex: 1;
  display: flex;
  flex-direction: column;
  background:
    linear-gradient(rgba(255,255,255,0) 52%, rgba(255,255,255,.5) 61%, #fff 72%, rgba(255,255,255,.9) 84%, rgba(255,255,255,.6)),
    radial-gradient(ellipse 28% 90% at 79% 40%, #d4d8e4, rgba(216,220,231,.6) 50%, rgba(222,226,235,0)),
    radial-gradient(ellipse 65% 36% at 42% 57%, #dce0ea, rgba(226,230,238,.7) 45%, rgba(255,255,255,0)),
    linear-gradient(90deg, #fff 55%, #eceef3 80%);
}
.command-row { display: flex; height: 28px; }
.cmd-tabs {
  display: grid;
  grid-template-columns: repeat(5, 56px) 152px 57px 190px;
  background: var(--dark);
  border-bottom: 1px solid var(--line);
}
.cmd-tabs button {
  padding-bottom: 2px;
  border-right: 1px solid var(--line);
  font-size: 16px;
}
.cmd-tabs .en { font-size: 15px; }
.cmd-tabs .active { background: var(--bg); }
.hud { display: flex; padding: 2px 0 0 238px; color: #999; }
.doc-tools { display: flex; margin-left: auto; padding: 2px 6px 0 0; color: #999; }

.workspace { flex: 1; display: flex; }

/* Feature manager panel */
.panel {
  display: flex;
  flex-direction: column;
  width: 273px;
  flex: none;
  background: var(--bg);
  border-left: 1px solid #999;
  border-right: 2px solid var(--line);
}
.grip {
  display: flex;
  align-items: center;
  justify-content: center;
  height: 25px;
  margin-bottom: 4px;
  padding: 2px 2px 0 0;
  border-top: 1px solid #9fb4b8;
  border-bottom: 1px solid var(--line);
}
.panel-tabs { display: flex; height: 26px; padding-left: 1px; border-top: 1px solid var(--line); }
.panel-tabs button {
  width: 40px;
  background: var(--dark);
  border-right: 1px solid var(--line);
  border-bottom: 1px solid var(--line);
}
.panel-tabs .active { background: none; border-bottom: 0; }
.panel-tabs .more { flex: 1; background: none; border-right: 0; }

.filter {
  display: flex;
  align-items: center;
  height: 31px;
  margin: 0 4px;
  border: 1px solid var(--line);
  background: #565656;
}
.filter input { flex: 1; min-width: 0; border: 0; background: none; color: inherit; }

.tree {
  margin: 0;
  padding: 0 0 2px;
  list-style: none;
  font-size: 15px;
  border-bottom: 4px solid #3a8fc8;
}
.tree li { display: flex; align-items: center; height: 24px; gap: 5px; overflow: hidden; white-space: nowrap; }
.tree li span { line-height: 22px; padding-bottom: 2px; }
.tree .root { padding-left: 2px; gap: 4px; }
.tree .name { font-size: 16px; }
.twist { width: 21px; }

.hscroll { display: flex; height: 21px; margin-top: auto; background: #f0f0f0; }
.hscroll button { width: 20px; }
.track { flex: 1; }
.thumb { width: 78%; height: 100%; background: #cdcdcd; }
.panel-foot { height: 5px; border-bottom: 1px solid var(--line); }

/* Graphics area */
.viewport { position: relative; flex: 1; display: flex; justify-content: center; padding: 42px 3px 69px 0; }
.collapse {
  position: absolute;
  left: -2px;
  top: 387px;
  width: 13px;
  height: 49px;
  background: var(--bg);
  border: 1px solid var(--line);
  border-left: 0;
}
.triad { position: absolute; left: 4px; bottom: 58px; }
.axis-x, .axis-y { font: 12px "Liberation Serif", serif; fill: #e00; }
.axis-y { fill: #080; }
.task-pane {
  position: absolute;
  right: 0;
  top: 29px;
  width: 33px;
  border: 1px solid var(--line);
  border-right: 0;
}
.task-pane button { width: 32px; height: 30px; background: var(--dark); border-bottom: 1px solid var(--line); }
.task-pane button:last-child { border-bottom: 0; }
.task-pane .active { background: #b4b4b4; }

/* Bottom bars */
.model-tabs { display: flex; height: 21px; border-top: 1px solid var(--line); border-bottom: 1px solid var(--line); }
.pager { display: flex; padding: 0 1px 0 2px; }
.pager button { width: 20px; background: #a9a9c3; border: 1px solid #7f7f99; border-top-color: #111; }
.mtabs { display: grid; grid-template-columns: 61px 77px 108px; }
.mtabs button { background: var(--dark); border-right: 1px solid var(--line); font-size: 17px; line-height: 19px; }
.mtabs .en { font-size: 16px; }
.mtabs .active { background: var(--bg); padding-left: 4px; }

.status { position: relative; display: flex; align-items: center; height: 21px; padding: 3px 3px 0 0; font-size: 15px; line-height: 18px; white-space: nowrap; }
.product { flex: 1; padding-left: 1px; font-size: 16px; }
.editing { margin-right: 27px; }
.units { gap: 20px; margin: 0 26px 0 77px; }
.watermark {
  position: absolute;
  right: 10px;
  bottom: 10px;
  font: 16px "Liberation Sans", Arial, sans-serif;
  color: rgba(255,255,255,.6);
}
```
